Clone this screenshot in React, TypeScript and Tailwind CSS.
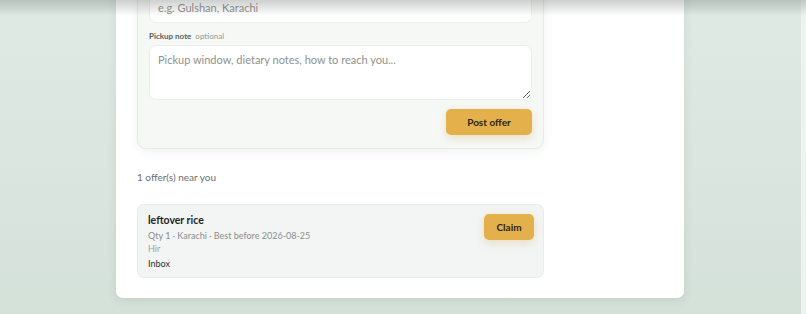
const font = { fontFamily: "Lato, Inter, sans-serif" };

const App = () => {
  return (
    <div
      className="relative flex w-[806px] h-[314px] overflow-hidden bg-gradient-to-b from-[#e0eae4] to-[#d4e1d9] text-[#1f2421]"
      style={font}
    >
      <div className="flex-1 flex flex-col">
        <div className="ml-[116px] -mt-[40px] w-[568px] bg-white rounded-b-[7px] shadow-[0_2px_10px_rgba(60,90,70,0.12)] pl-[21px] pb-[20px]">
          <div className="w-[407px] rounded-[9px] border border-[#e6ebe7] bg-[#f6f8f6] px-[11px] pt-[10px] pb-[13px] shadow-[0_3px_10px_rgba(60,90,70,0.08)]">
            <div className="h-[52px] rounded-[7px] border border-[#eceeed] bg-white px-[8px] flex items-end pb-[6px] text-[11px] text-[#8d918f]">
              e.g. Gulshan, Karachi
            </div>
            <div className="mt-[8px] flex items-baseline gap-[4px] text-[8px] leading-[10px]">
              <span className="font-bold text-[#56615b]">Pickup note</span>
              <span className="text-[#8f9893]">optional</span>
            </div>
            <textarea
              className="mt-[4px] block w-full h-[55px] rounded-[7px] border border-[#eceeed] bg-white px-[8px] py-[6px] text-[11px] placeholder:text-[#8d918f] outline-none resize-y"
              placeholder="Pickup window, dietary notes, how to reach you..."
            />
            <div className="mt-[9px] flex justify-end">
              <button className="w-[86px] h-[26px] rounded-[5px] bg-[#e4b04b] text-[10px] font-bold text-[#2b2414] shadow-[0_3px_8px_rgba(200,150,50,0.25)]">
                Post offer
              </button>
            </div>
          </div>
          <div className="mt-[21px] text-[10px] leading-[14px] text-[#6b706d]">1 offer(s) near you</div>
          <div className="mt-[20px] w-[407px] h-[74px] rounded-[7px] border border-[#e8ebe9] bg-[#f3f5f4] pl-[10px] pr-[9px] pt-[8px] flex justify-between">
            <div className="flex flex-col">
              <div className="text-[10.5px] font-bold text-[#1f2421] leading-[14px]">leftover rice</div>
              <div className="mt-[3px] text-[9px] text-[#8a8f8c] leading-[12px]">
                Qty 1 · Karachi · Best before 2026-08-25
              </div>
              <div className="mt-[1px] text-[9px] text-[#9ca19e] leading-[12px]">Hir</div>
              <div className="mt-[3px] text-[9px] text-[#2b302d] leading-[12px]">Inbox</div>
            </div>
            <button className="mt-[1px] w-[50px] h-[26px] rounded-[5px] bg-[#e4b04b] text-[10px] font-bold text-[#2b2414] shadow-[0_3px_8px_rgba(200,150,50,0.25)]">
              Claim
            </button>
          </div>
        </div>
      </div>
      <div className="w-[5px] bg-[#eef3f0]" />
      <div className="absolute inset-x-0 top-0 h-[16px] bg-gradient-to-b from-[rgba(60,70,65,0.25)] to-transparent pointer-events-none" />
    </div>
  );
};

export default App;
